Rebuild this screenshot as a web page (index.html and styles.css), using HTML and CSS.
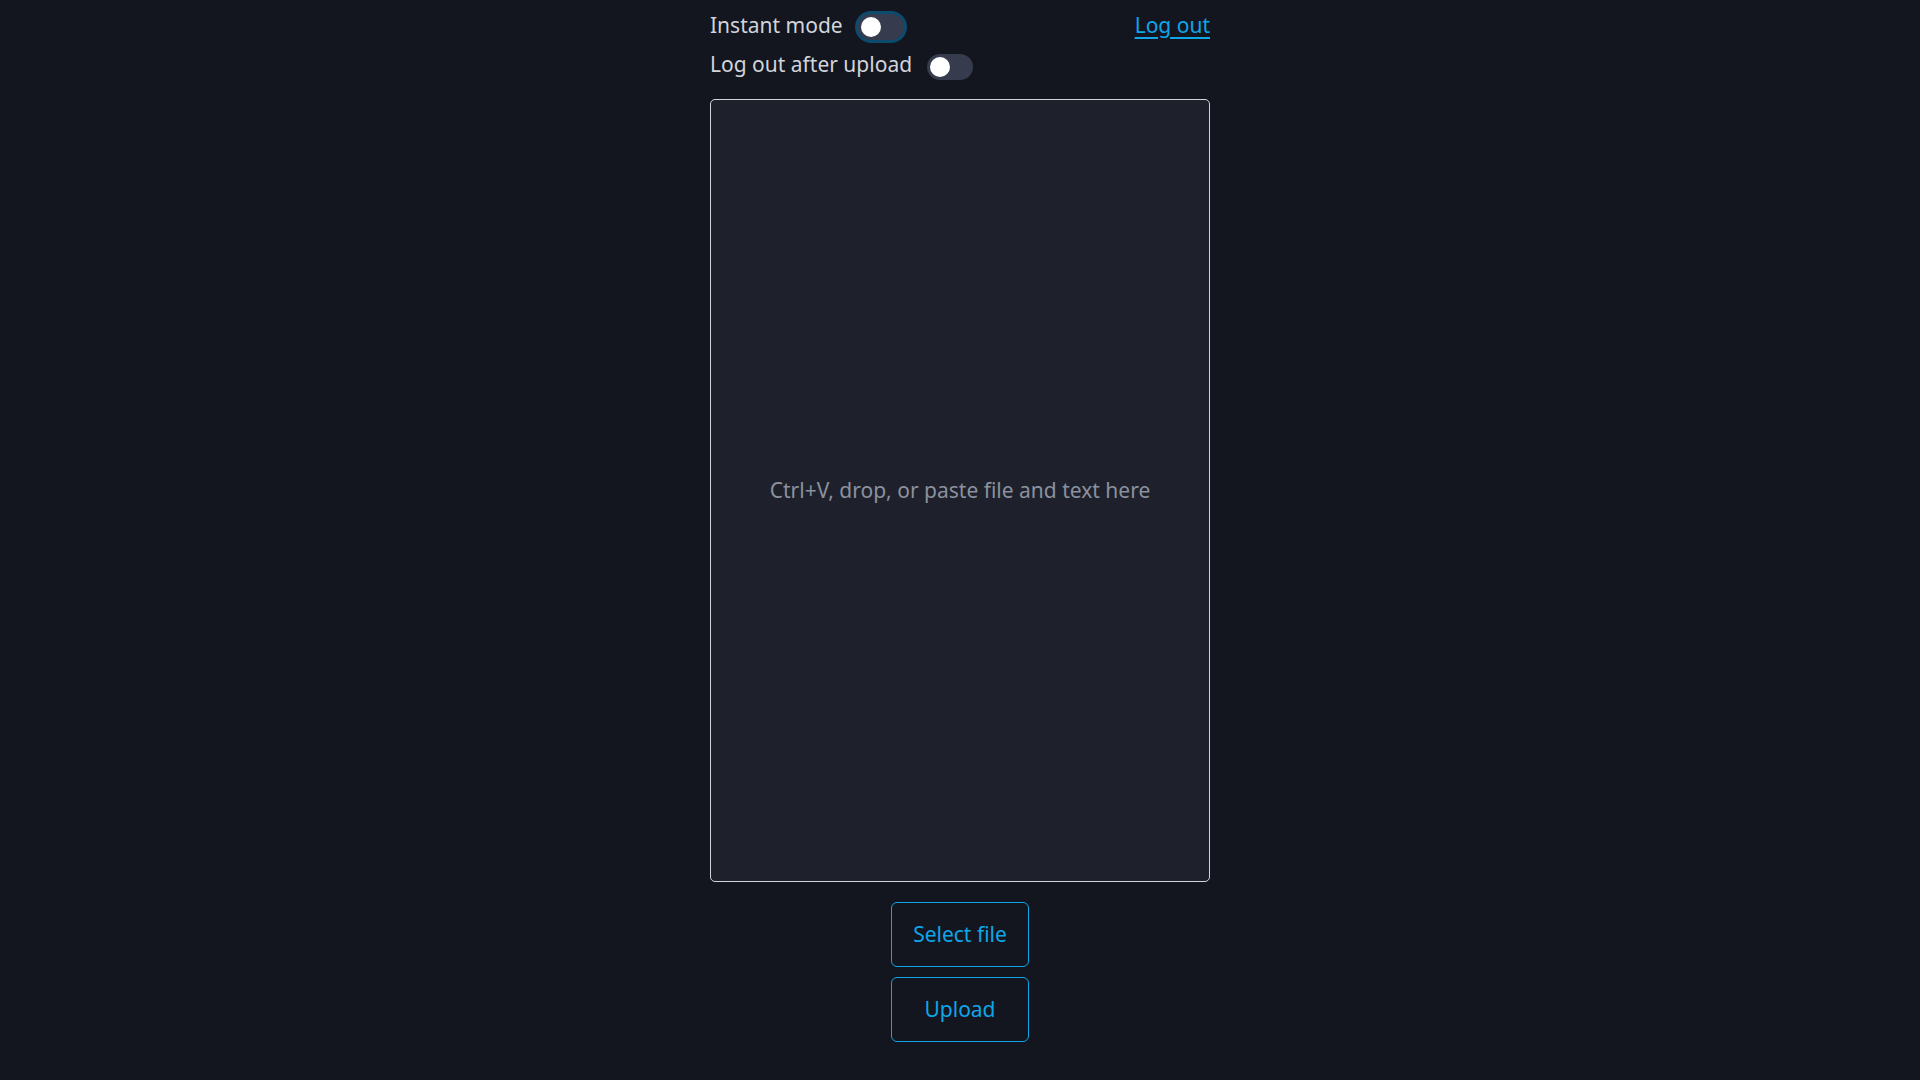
FILE: index.html
```html
<!DOCTYPE html>
<html lang="en">
<head>
<meta charset="utf-8">
<title>Upload</title>
<link rel="stylesheet" href="styles.css">
</head>
<body>
<main class="page">
  <div class="row">
    <span class="label">Instant mode</span>
    <span class="toggle toggle-focus"><span class="knob"></span></span>
    <a class="logout" href="#">Log out</a>
  </div>
  <div class="row row-second">
    <span class="label">Log out after upload</span>
    <span class="toggle toggle-low"><span class="knob"></span></span>
  </div>
  <div class="drop">
    <span class="drop-text">Ctrl+V, drop, or paste file and text here</span>
  </div>
  <div class="actions">
    <button class="btn" type="button">Select file</button>
    <button class="btn" type="button">Upload</button>
  </div>
</main>
</body>
</html>
```

FILE: styles.css
```css
html, body {
  margin: 0;
  padding: 0;
  background: #13161e;
  height: 100%;
}

body {
  font-family: "Noto Sans", "Open Sans", sans-serif;
  font-size: 21px;
  color: #d1d5db;
}

.page {
  width: 500px;
  margin: 0 auto;
  padding-top: 9px;
  display: flex;
  flex-direction: column;
}

.row {
  height: 31px;
  display: flex;
  align-items: center;
}

.row-second {
  margin-top: 8px;
}

.label {
  line-height: 28px;
  color: #d1d5db;
}

.toggle {
  width: 46px;
  height: 26px;
  margin-left: 15px;
  margin-top: 5px;
  border-radius: 13px;
  background: #363b4d;
  display: flex;
  align-items: center;
  padding-left: 3px;
  box-sizing: border-box;
}

.toggle-low {
  margin-top: 7px;
}

.toggle-focus {
  box-shadow: 0 0 0 3px #0c4a6e;
}

.knob {
  width: 20px;
  height: 20px;
  border-radius: 50%;
  background: #ffffff;
}

.logout {
  margin-left: auto;
  color: #0ea5e9;
  text-decoration: underline;
  text-underline-offset: 4px;
  line-height: 28px;
}

.drop {
  margin-top: 20px;
  height: 783px;
  box-sizing: border-box;
  border: 1px solid #d1d5db;
  border-radius: 5px;
  background: #1e212c;
  display: flex;
  align-items: center;
  justify-content: center;
}

.drop-text {
  color: #8b919e;
  font-size: 21px;
  padding-bottom: 2px;
}

.actions {
  margin-top: 20px;
  display: flex;
  flex-direction: column;
  align-items: center;
  gap: 10px;
}

.btn {
  width: 138px;
  height: 65px;
  box-sizing: border-box;
  border: 1px solid #0ea5e9;
  border-radius: 6px;
  background: transparent;
  color: #0ea5e9;
  font-family: "Noto Sans", "Open Sans", sans-serif;
  font-size: 21px;
  padding: 0 0 2px 0;
  cursor: pointer;
}
```
